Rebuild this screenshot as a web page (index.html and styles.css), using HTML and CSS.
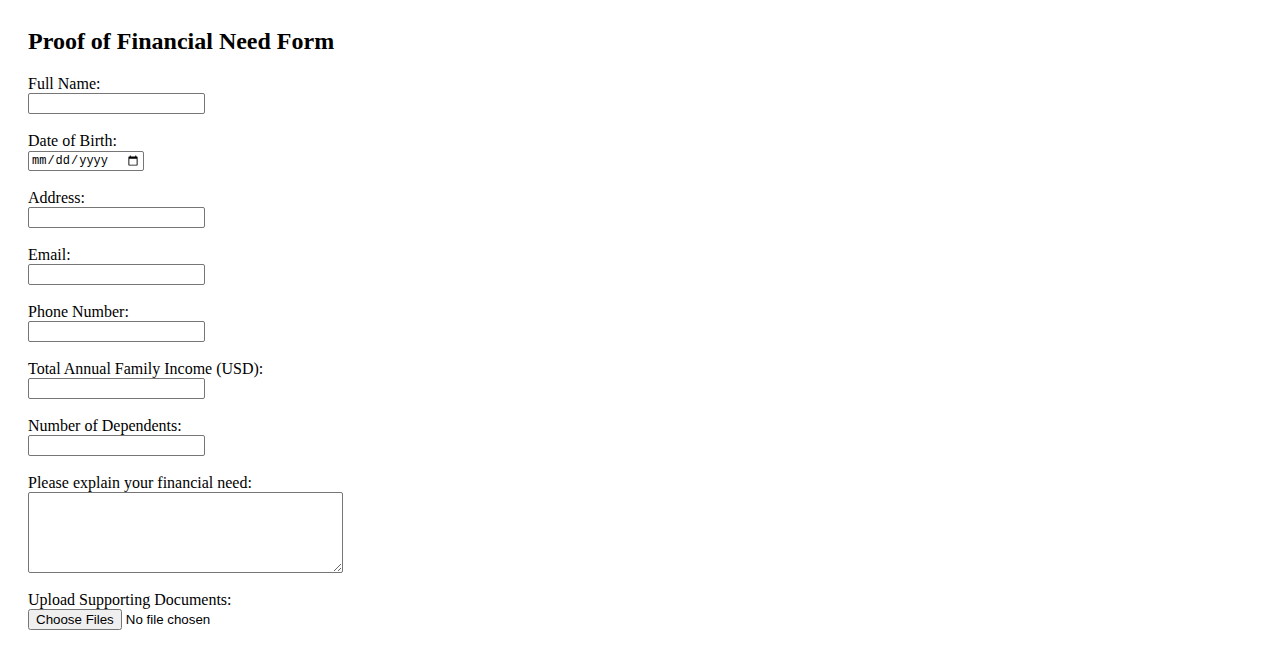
FILE: index.html
```html
<!DOCTYPE html>
<html lang="en">
<head>
<meta charset="utf-8">
<title>Proof of Financial Need Form</title>
<link rel="stylesheet" href="styles.css">
</head>
<body>
<div class="page">
  <h2 class="title">Proof of Financial Need Form</h2>
  <form class="form">
    <div class="field">
      <label class="label" for="name">Full Name:</label>
      <input class="text" type="text" id="name">
    </div>
    <div class="field">
      <label class="label" for="dob">Date of Birth:</label>
      <input class="date" type="date" id="dob">
    </div>
    <div class="field">
      <label class="label" for="addr">Address:</label>
      <input class="text" type="text" id="addr">
    </div>
    <div class="field">
      <label class="label" for="email">Email:</label>
      <input class="text" type="email" id="email">
    </div>
    <div class="field">
      <label class="label" for="phone">Phone Number:</label>
      <input class="text" type="tel" id="phone">
    </div>
    <div class="field">
      <label class="label" for="income">Total Annual Family Income (USD):</label>
      <input class="text" type="text" id="income">
    </div>
    <div class="field">
      <label class="label" for="deps">Number of Dependents:</label>
      <input class="text" type="text" id="deps">
    </div>
    <div class="field">
      <label class="label" for="need">Please explain your financial need:</label>
      <textarea class="area" id="need"></textarea>
    </div>
    <div class="field">
      <label class="label" for="docs">Upload Supporting Documents:</label>
      <input class="file" type="file" id="docs" multiple>
    </div>
  </form>
</div>
</body>
</html>
```

FILE: styles.css
```css
html, body {
  margin: 0;
  padding: 0;
  background: #ffffff;
}
body {
  font-family: "Liberation Serif", "Times New Roman", serif;
  font-size: 16px;
  color: #000000;
}
.page {
  padding: 27px 28px 28px;
}
.title {
  margin: 0 0 20px 0;
  font-size: 24px;
  font-weight: bold;
  line-height: 28px;
}
.form {
  display: flex;
  flex-direction: column;
  align-items: flex-start;
}
.field {
  display: flex;
  flex-direction: column;
  align-items: flex-start;
  margin-bottom: 18px;
}
.label {
  line-height: 18px;
  height: 18px;
}
.text, .date {
  box-sizing: border-box;
  height: 21px;
  margin: 0;
  border: 1px solid #767676;
  border-radius: 2px;
  padding: 1px 2px;
  font-family: "Liberation Sans", Arial, sans-serif;
  font-size: 13.33px;
  background: #ffffff;
}
.text {
  width: 177px;
}
.date {
  width: 116px;
  height: 20px;
  margin-top: 1px;
  padding: 0 2px;
  font-family: "Liberation Mono", monospace;
  font-size: 12px;
}
.area {
  box-sizing: border-box;
  width: 315px;
  height: 81px;
  margin: 0;
  border: 1px solid #767676;
  border-radius: 2px;
  padding: 2px;
  font-family: "Liberation Mono", monospace;
  font-size: 13.33px;
}
.file {
  margin: 0;
  font-family: "Liberation Sans", Arial, sans-serif;
  font-size: 13.33px;
}
```
